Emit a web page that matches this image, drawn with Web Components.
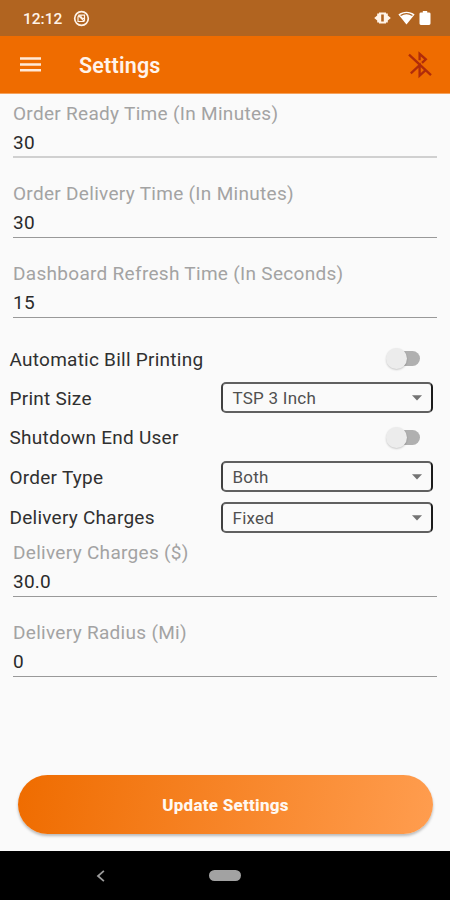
<!DOCTYPE html>
<html lang="en">
<head>
<meta charset="utf-8">
<title>Settings</title>
<style>
html, body { margin: 0; height: 100%; background: #fafafa; }
body { font-family: Roboto, "Liberation Sans", sans-serif; overflow: hidden; }
</style>
</head>
<body>
<settings-screen></settings-screen>
<script>
const define = (name, html) => {
  const template = document.createElement('template');
  template.innerHTML = html;
  customElements.define(name, class extends HTMLElement {
    constructor() {
      super();
      this.attachShadow({ mode: 'open' }).append(template.content.cloneNode(true));
    }
  });
};

define('status-bar', `
<style>
:host { display: flex; align-items: center; box-sizing: border-box; height: 36px; padding: 0 19px 0 23px; background: #b16420; color: #fff3e8; }
time { font-size: 15.5px; font-weight: 500; line-height: 20px; width: 50px; margin-top: 2px; }
svg { display: block; }
.right { margin-left: auto; display: flex; align-items: center; gap: 7px; }
</style>
<time>12:12</time>
<svg width="17" height="17" viewBox="0 0 17 17" fill="none" stroke="currentColor"><circle cx="8.5" cy="8.5" r="6.8" stroke-width="1.7"/><path d="M5 6.2v5.3h6.3M5.4 5.2h6.1v5.5M5.2 5.3l6.3 6.2M7.8 5.4c0 1.7 1.5 3.1 3.6 3.1" stroke-width="1.2"/></svg>
<div class="right">
<svg width="17" height="14" viewBox="0 0 17 14" fill="currentColor"><path fill-rule="evenodd" d="M5 1.5h7v11H5zM7.2 3.6v6.8h2.6V3.6z"/><path d="M5 2.6v8.8H3.2V9.5L.2 7l3-2.5V2.6zM12 2.6v8.8h1.8V9.5l3-2.5-3-2.5V2.6z"/></svg>
<svg width="17" height="14" viewBox="0 0 17 14"><path fill="#fff" d="M.4 3.4C5-.3 12-.3 16.6 3.4L8.5 13.4z"/><path d="M2.6 4.5c3.5-2.3 8.3-2.3 11.8 0" fill="none" stroke="#b16420" stroke-width="1.2"/></svg>
<svg style="margin-left:-3px" width="12" height="14" viewBox="0 0 12 14"><path fill="#fff" d="M3.8 0h4.4v1.4H10q1.5 0 1.5 1.4v9.8q0 1.4-1.4 1.4H1.9Q.5 14 .5 12.6V2.8q0-1.4 1.4-1.4h1.9z"/></svg>
</div>`);

define('app-bar', `
<style>
:host { display: flex; align-items: center; box-sizing: border-box; height: 58px; padding: 0 18px 0 20px; background: #ef6c00; color: #fff3ea; border-bottom: 1px solid #f5a25c; }
h1 { margin: 2px 0 0 38px; font-size: 21.5px; font-weight: 600; line-height: 26px; letter-spacing: .2px; }
.bt { margin-left: auto; }
svg { display: block; }
</style>
<svg width="21" height="15" viewBox="0 0 21 15" fill="#ffe9d8"><path d="M0 .3h21v2.5H0zM0 6.2h21v2.5H0zM0 12.1h21v2.5H0z"/></svg>
<h1><slot></slot></h1>
<svg class="bt" width="24" height="30" viewBox="0 0 24 30" fill="none" stroke="#b02c0a" stroke-width="2.3"><path d="M1 4.6 23 25.2M11.6 10.2V3.8l6.2 5.5-3.8 3.6M2.8 23.3l8.8-8.1v10.4l5.8-5.2"/></svg>`);

define('text-field', `
<style>
:host { display: flex; flex-direction: column; box-sizing: border-box; height: 56px; font-size: 19px; line-height: 24px; letter-spacing: .3px; white-space: nowrap; border-bottom: var(--line, 1px solid #999); }
.label { color: #a3a3a3; height: 29px; }
.value { color: #2a2a2a; letter-spacing: .2px; }
</style>
<div class="label"><slot name="label"></slot></div>
<div class="value"><slot></slot></div>`);

define('setting-row', `
<style>
:host { display: grid; grid-template-columns: 211px 212px; align-items: center; justify-items: end; font-size: 19px; line-height: 24px; color: #303030; letter-spacing: .25px; white-space: nowrap; }
.label { justify-self: start; padding-top: 2px; }
</style>
<div class="label"><slot></slot></div><slot name="control"></slot>`);

define('toggle-switch', `
<style>
:host { display: flex; align-items: center; width: 35px; height: 22px; margin-right: 12px; }
.thumb { width: 21px; height: 21px; border-radius: 50%; background: #ececec; box-shadow: 0 1px 2px #0003; flex: none; z-index: 1; }
.track { width: 29px; height: 15px; margin-left: -16px; border-radius: 8px; background: #b0b0b0; flex: none; }
</style>
<div class="thumb"></div><div class="track"></div>`);

define('select-box', `
<style>
:host { display: flex; align-items: center; justify-content: space-between; box-sizing: border-box; width: 212px; height: 31px; padding: 0 9px 0 10px; border: 2px solid #606060; border-left-color: #404040; border-right-color: #1c1c1c; border-radius: 5px; font-size: 17px; line-height: 20px; color: #505050; letter-spacing: .25px; }
.text { padding-top: 1px; }
svg { display: block; margin-top: 1px; }
</style>
<div class="text"><slot></slot></div><svg width="10" height="6" viewBox="0 0 10 6"><path fill="#737373" d="M0 .3h10L5 5.6z"/></svg>`);

define('primary-button', `
<style>
:host { display: flex; align-items: center; justify-content: center; height: 59px; margin: 0 17px 0 18px; border-radius: 30px; background: linear-gradient(100deg, #ef6c00, #ff9d4f); color: #fff8f2; font-size: 17px; font-weight: 800; line-height: 22px; letter-spacing: .25px; box-shadow: 0 2px 3px #0004; }
span { padding-top: 1px; }
</style>
<span><slot></slot></span>`);

define('nav-bar', `
<style>
:host { display: grid; grid-template-columns: 1fr 32px 1fr; align-items: center; height: 49px; background: #000; }
svg { display: block; margin-left: 96px; }
.home { height: 11px; border-radius: 6px; background: #a2a2a2; }
</style>
<svg width="9" height="12" viewBox="0 0 9 12" fill="none" stroke="#9b9b9b" stroke-width="1.8"><path d="M7.9.9 2 6l5.9 5.1"/></svg>
<div class="home"></div>`);

define('settings-screen', `
<style>
:host { display: flex; flex-direction: column; width: 450px; height: 900px; background: #fafafa; }
.fields { display: flex; flex-direction: column; gap: 24px; padding: 8px 13px 0; }
.rows { display: grid; grid-template-rows: 39px 39px 40px 39px 42px; margin: 21px 17px 0 9.5px; }
.lower { padding-top: 3px; }
primary-button { margin-top: auto; }
nav-bar { margin-top: 17px; }
</style>
<status-bar></status-bar>
<app-bar>Settings</app-bar>
<div class="fields">
<text-field style="--line:2px solid #d0d0d0"><span slot="label">Order Ready Time (In Minutes)</span>30</text-field>
<text-field><span slot="label">Order Delivery Time (In Minutes)</span>30</text-field>
<text-field><span slot="label">Dashboard Refresh Time (In Seconds)</span>15</text-field>
</div>
<div class="rows">
<setting-row>Automatic Bill Printing<toggle-switch slot="control"></toggle-switch></setting-row>
<setting-row>Print Size<select-box slot="control">TSP 3 Inch</select-box></setting-row>
<setting-row>Shutdown End User<toggle-switch slot="control"></toggle-switch></setting-row>
<setting-row>Order Type<select-box slot="control">Both</select-box></setting-row>
<setting-row>Delivery Charges<select-box slot="control">Fixed</select-box></setting-row>
</div>
<div class="fields lower">
<text-field><span slot="label">Delivery Charges ($)</span>30.0</text-field>
<text-field><span slot="label">Delivery Radius (Mi)</span>0</text-field>
</div>
<primary-button>Update Settings</primary-button>
<nav-bar></nav-bar>`);
</script>
</body>
</html>
